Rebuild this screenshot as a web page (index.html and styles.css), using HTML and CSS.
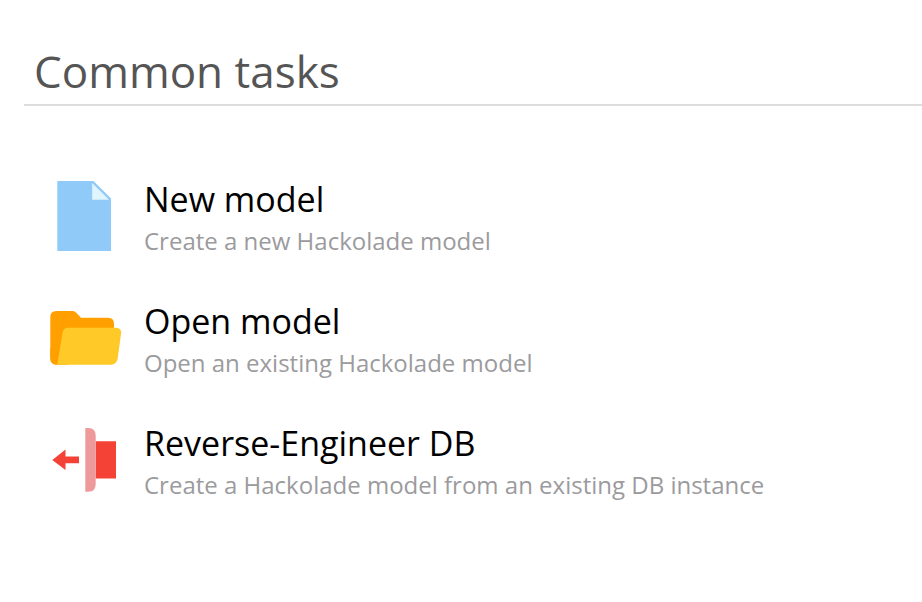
FILE: index.html
```html
<!DOCTYPE html>
<html lang="en">
<head>
<meta charset="utf-8">
<title>Common tasks</title>
<link rel="stylesheet" href="styles.css">
</head>
<body>
<main class="panel">
<h1 class="title">Common tasks</h1>
<ul class="tasks">
<li class="task">
<svg class="icon" viewBox="0 0 76 76"><path fill="#90caf9" d="M9.300 3H45.500L63 20.500V73H9.300z"/><path fill="#e1f5fe" d="M44.200 5V21.700H61z"/></svg>
<div class="text"><h2 class="name">New model</h2><p class="desc">Create a new Hackolade model</p></div>
</li>
<li class="task">
<svg class="icon" viewBox="0 0 76 76"><path fill="#ffa000" d="M8.500 11H25Q26.500 11 28 12.500L33 17.700H60Q66 17.700 66 24V58H8.500V64.700Q2.300 64 2.300 58V17Q2.300 11 8.500 11z"/><path fill="#ffa000" d="M2.300 48H20V64.700H8.500Q2.300 64.700 2.300 58z"/><path fill="#ffca28" d="M20 27.700H68Q74.200 28 73 34L69.600 59Q68.500 64.700 63 64.700H9.300L14.500 33Q15.500 27.700 20 27.700z"/></svg>
<div class="text"><h2 class="name">Open model</h2><p class="desc">Open an existing Hackolade model</p></div>
</li>
<li class="task">
<svg class="icon" viewBox="0 0 76 76"><path fill="#f44336" d="M47.700 19.200H68V56.400H47.700zM4.300 38L17.500 27.500V34.600H31V41.200H17.500V48z"/><path fill="#ef9a9a" d="M37.300 6H40.500Q47.700 6 47.700 13.500V62Q47.700 69.700 40.500 69.700H37.300z"/></svg>
<div class="text"><h2 class="name">Reverse-Engineer DB</h2><p class="desc">Create a Hackolade model from an existing DB instance</p></div>
</li>
</ul>
</main>
</body>
</html>
```
FILE: styles.css
```css
* { box-sizing: border-box; }
body { margin: 0; background: #fff; font-family: "Open Sans", sans-serif; overflow: hidden; }
.panel { padding: 42px 0 0 24px; }
.title { margin: 0; height: 64px; padding-left: 10px; border-bottom: 2px solid #ddd; font-size: 44px; line-height: 58px; font-weight: 400; color: #555; }
.tasks { list-style: none; margin: 0; padding: 72px 0 0 24px; }
.task { display: flex; height: 122px; }
.icon { width: 76px; height: 76px; flex: none; }
.text { padding-left: 20px; white-space: nowrap; }
.name { margin: 0; padding-bottom: 2px; font-size: 34px; line-height: 42px; font-weight: 400; color: #000; }
.desc { margin: 0; font-size: 24px; line-height: 38px; color: #9b9b9e; }
```
